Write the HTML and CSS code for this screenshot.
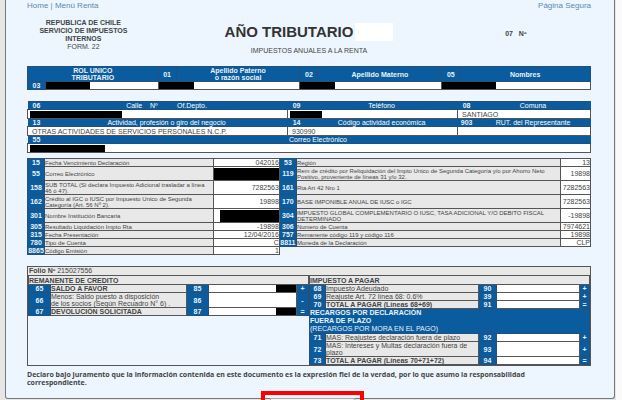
FILE: index.html
```
<!DOCTYPE html>
<html lang="es">
<head>
  <meta charset="UTF-8">
  <meta name="viewport" content="width=device-width, initial-scale=1.0">
  <title>Formulario 22</title>
  <link rel="stylesheet" href="styles.css">
</head>
<body>

  <main class="panel">
    <nav class="top-links">
      <span><a href="#">Home</a> | <a href="#">Menú Renta</a></span>
      <a href="#">Página Segura</a>
    </nav>

    <header class="form-header">
      <div class="agency">
        <b>REPUBLICA DE CHILE<br>SERVICIO DE IMPUESTOS<br>INTERNOS</b><br>FORM. 22
      </div>
      <div class="title">
        <h1>AÑO TRIBUTARIO <span class="year"></span></h1>
        <p>IMPUESTOS ANUALES A LA RENTA</p>
      </div>
      <div class="number">07 &nbsp; Nº</div>
    </header>

    <table class="names">
      <colgroup>
        <col class="code"><col class="rut">
        <col class="code"><col class="surname">
        <col class="code"><col class="surname">
        <col class="code"><col>
      </colgroup>
      <tr>
        <th colspan="2">ROL UNICO<br>TRIBUTARIO</th>
        <th>01</th><th>Apellido Paterno<br>o razón social</th>
        <th>02</th><th>Apellido Materno</th>
        <th>05</th><th>Nombres</th>
      </tr>
      <tr>
        <th>03</th>
        <td><span class="hidden w44"></span></td>
        <td colspan="2"><span class="hidden w35"></span></td>
        <td colspan="2"><span class="hidden w35"></span></td>
        <td colspan="2"><span class="hidden w54"></span></td>
      </tr>
    </table>

    <table class="address">
      <colgroup>
        <col class="code"><col class="street">
        <col class="code"><col class="phone">
        <col class="code"><col>
      </colgroup>
      <tr class="open">
        <th>06</th><th class="name">Calle &nbsp; &nbsp;Nº &nbsp; &nbsp; &nbsp; &nbsp; &nbsp;Of.Depto.</th>
        <th>09</th><th class="name">Teléfono</th>
        <th>08</th><th class="name">Comuna</th>
      </tr>
      <tr>
        <td colspan="2" class="masked"><span class="hidden w92"></span></td>
        <td colspan="2" class="masked"><span class="hidden w32"></span></td>
        <td colspan="2">SANTIAGO</td>
      </tr>
      <tr class="open">
        <th>13</th><th class="name">Actividad, profesión o giro del negocio</th>
        <th>14</th><th class="name">Código actividad económica</th>
        <th>903</th><th class="name">RUT. del Representante</th>
      </tr>
      <tr>
        <td colspan="2">OTRAS ACTIVIDADES DE SERVICIOS PERSONALES N.C.P.</td>
        <td colspan="2">930990</td>
        <td colspan="2"></td>
      </tr>
      <tr class="open">
        <th>55</th><th colspan="5" class="name">Correo Electrónico</th>
      </tr>
      <tr>
        <td colspan="6" class="masked"><span class="hidden w75"></span></td>
      </tr>
    </table>

    <table class="codes">
      <colgroup>
        <col class="code"><col class="label"><col class="value">
        <col class="code"><col><col class="amount">
      </colgroup>
      <tr>
        <th>15</th><td>Fecha Vencimiento Declaración</td><td class="num">042016</td>
        <th>53</th><td>Región</td><td class="num">13</td>
      </tr>
      <tr class="tall">
        <th>55</th><td>Correo Electrónico</td><td class="num"><span class="hidden full"></span></td>
        <th>119</th><td>Rem de crédito por Reliquidación del Impto Unico de Segunda Categoría y/o por Ahorro Neto<br>Positivo, proveniente de líneas 31 y/o 32.</td><td class="num">19898</td>
      </tr>
      <tr class="tall">
        <th>158</th><td>SUB TOTAL (Si declara Impuesto Adicional trasladar a línea<br>46 ó 47).</td><td class="num">7282563</td>
        <th>161</th><td>Rta Art 42 Nro 1</td><td class="num">7282563</td>
      </tr>
      <tr class="tall">
        <th>162</th><td>Crédito al IGC o IUSC por Impuesto Unico de Segunda<br>Categoría (Art. 56 Nº 2).</td><td class="num">19898</td>
        <th>170</th><td>BASE IMPONIBLE ANUAL DE IUSC o IGC</td><td class="num">7282563</td>
      </tr>
      <tr class="tall">
        <th>301</th><td>Nombre Institución Bancaria</td><td class="num"><span class="hidden most"></span></td>
        <th>304</th><td>IMPUESTO GLOBAL COMPLEMENTARIO O IUSC, TASA ADICIONAL Y/O DEBITO FISCAL<br>DETERMINADO</td><td class="num">-19898</td>
      </tr>
      <tr>
        <th>305</th><td>Resultado Liquidación Impto Rta</td><td class="num">-19898</td>
        <th>306</th><td>Numero de Cuenta</td><td class="num">7974621</td>
      </tr>
      <tr>
        <th>315</th><td>Fecha Presentación</td><td class="num">12/04/2016</td>
        <th>757</th><td>Remanente código 119 y código 116</td><td class="num">19898</td>
      </tr>
      <tr>
        <th>780</th><td>Tipo de Cuenta</td><td class="num">C</td>
        <th>8811</th><td>Moneda de la Declaración</td><td class="num">CLP</td>
      </tr>
      <tr>
        <th>8865</th><td>Código Emisión</td><td class="num">1</td>
      </tr>
    </table>

    <section class="totals">
      <p class="folio"><b>Folio Nº</b> 215027556</p>
      <div class="halves">
        <table class="credit">
          <colgroup>
            <col class="line"><col><col class="line"><col class="amount"><col class="sign">
          </colgroup>
          <tr><td colspan="5" class="caption"><b>REMANENTE DE CREDITO</b></td></tr>
          <tr><th>65</th><td><b>SALDO A FAVOR</b></td><th>85</th><td class="num"><span class="hidden w20"></span></td><th>+</th></tr>
          <tr><th>66</th><td>Menos: Saldo puesto a disposición<br>de los socios (Según Recuadro N° 6) .</td><th>86</th><td class="num"></td><th>-</th></tr>
          <tr><th>67</th><td><b>DEVOLUCIÓN SOLICITADA</b></td><th>87</th><td class="num"><span class="hidden w20"></span></td><th>=</th></tr>
        </table>
        <table class="tax">
          <colgroup>
            <col class="line"><col><col class="code"><col class="amount"><col class="sign">
          </colgroup>
          <tr><td colspan="5" class="caption"><b>IMPUESTO A PAGAR</b></td></tr>
          <tr><th>68</th><td>Impuesto Adeudado</td><th>90</th><td class="num"></td><th>+</th></tr>
          <tr><th>69</th><td>Reajuste Art. 72 línea 68: 0.6%</td><th>39</th><td class="num"></td><th>+</th></tr>
          <tr><th>70</th><td><b>TOTAL A PAGAR (Líneas 68+69)</b></td><th>91</th><td class="num"></td><th>=</th></tr>
          <tr><th colspan="5" class="surcharge">RECARGOS POR DECLARACIÓN<br>FUERA DE PLAZO<br><span>(RECARGOS POR MORA EN EL PAGO)</span></th></tr>
          <tr><th>71</th><td>MAS: Reajustes declaración fuera de plazo</td><th>92</th><td class="num"></td><th>+</th></tr>
          <tr><th>72</th><td>MAS: Intereses y Multas declaración fuera de<br>plazo</td><th>93</th><td class="num"></td><th>+</th></tr>
          <tr><th>73</th><td><b>TOTAL A PAGAR (Líneas 70+71+72)</b></td><th>94</th><td class="num"></td><th>=</th></tr>
        </table>
      </div>
    </section>

    <p class="oath">Declaro bajo juramento que la información contenida en este documento es la expresión fiel de la verdad, por lo que asumo la responsabilidad<br>correspondiente.</p>

    <div class="highlight">
      <button type="button"></button>
    </div>
  </main>

</body>
</html>
```

FILE: styles.css
```
* {
  box-sizing: border-box;
}

body {
  margin: 0;
  padding: 0 1px 2px 5px;
  background: #e6e6e6;
  border-right: 6px solid #fafafa;
  font-family: 'Liberation Sans', Arial, sans-serif;
  font-size: 7px;
  line-height: 7px;
  color: #444;
}

h1, p {
  margin: 0;
}

.panel {
  position: relative;
  padding: 0 23px 11px 21px;
  background: #edf6fe;
  border: 1px solid #777;
  border-top: 0;
  border-radius: 0 0 3px 3px;
}

.top-links {
  display: flex;
  justify-content: space-between;
  font-size: 8px;
  line-height: 11px;
  color: #5b87b0;
}

.top-links a {
  color: #5b87b0;
  text-decoration: none;
}

/* form heading */
.form-header {
  display: grid;
  grid-template-columns: 20% 1fr 20%;
  padding: 8px 0 11px;
  line-height: 8px;
}

.agency {
  text-align: center;
}

.title {
  padding-top: 4px;
  text-align: center;
}

.title h1 {
  display: flex;
  justify-content: center;
  align-items: center;
  gap: 2px;
  font-size: 15px;
  line-height: 18px;
  color: #333;
}

.title p {
  margin-top: 6px;
}

.year {
  width: 38px;
  height: 18px;
  background: #fff;
}

.number {
  padding: 11px 0 0 27px;
  font-weight: bold;
}

/* tables */
table {
  width: 100%;
  table-layout: fixed;
  border-collapse: collapse;
}

th, td {
  height: 8px;
  padding: 0;
  border: 1px solid #555;
}

th {
  background: #0a5c9e;
  border-color: #24507a;
  color: #e8f2fa;
}

.code {
  width: 18px;
}

.hidden {
  display: block;
  height: 7px;
  background: #000;
}

.w20 { width: 20px; }
.w32 { width: 32px; }
.w35 { width: 35px; }
.w44 { width: 44px; }
.w54 { width: 54px; }
.w75 { width: 75px; }
.w92 { width: 92px; }
.full { width: 100%; }
.most { width: 90%; }

.names td, .address td {
  background: #fff;
}

.names .rut { width: 20%; }
.names .surname { width: 22%; }

.address {
  margin-top: 11px;
}

.address .street { width: 43%; }
.address .phone { width: 27%; }

.address td {
  height: 9px;
  padding-left: 4px;
}

.address .masked {
  padding-left: 2px;
}

.address .name {
  font-weight: normal;
  color: #fff;
}

.address .open th {
  border-left: 0;
  border-right: 0;
}

.codes {
  margin-top: 5px;
  font-size: 6px;
  line-height: 6px;
}

.codes .code { width: 17px; }
.codes .label { width: 30%; }
.codes .value { width: 66px; }
.codes .amount { width: 30px; }

.codes th {
  font-size: 7px;
}

.codes td {
  background: #e8e8e8;
}

.codes .tall td {
  height: 14px;
}

.codes .num, .totals .num {
  background: #fff;
  font-size: 7px;
  text-align: right;
}

.codes .hidden {
  height: 12px;
}

.num .hidden {
  margin-left: auto;
}

.totals {
  margin-top: 11px;
  border: 1px solid #555;
}

.folio {
  padding-left: 1px;
  line-height: 8px;
  background: #e8e8e8;
}

.halves {
  display: flex;
  align-items: flex-start;
}

.totals td {
  background: #e8e8e8;
}

.totals .caption {
  height: 9px;
}

.totals .line { width: 22px; }
.totals .amount { width: 88px; }
.totals .sign { width: 12px; }

.tax .line { width: 16px; }
.tax .amount { width: 83px; }
.tax .sign { width: 10px; }

.totals .surcharge {
  line-height: 8px;
  text-align: left;
}

.surcharge span {
  font-weight: normal;
}

.oath {
  margin-top: 5px;
  font-family: 'Open Sans', sans-serif;
  font-weight: bold;
  line-height: 8px;
}

/* red frame round the button under the form */
.highlight {
  position: absolute;
  bottom: -3px;
  left: 42%;
  width: 103px;
  height: 10px;
  padding: 0 5px;
  border: 4px solid #f00;
  border-bottom: 0;
  display: flex;
  align-items: flex-end;
}

.highlight button {
  width: 100%;
  height: 3px;
  padding: 0;
  background: #f6f6f6;
  border: 1px solid #aaa;
  border-bottom: 0;
}
```
